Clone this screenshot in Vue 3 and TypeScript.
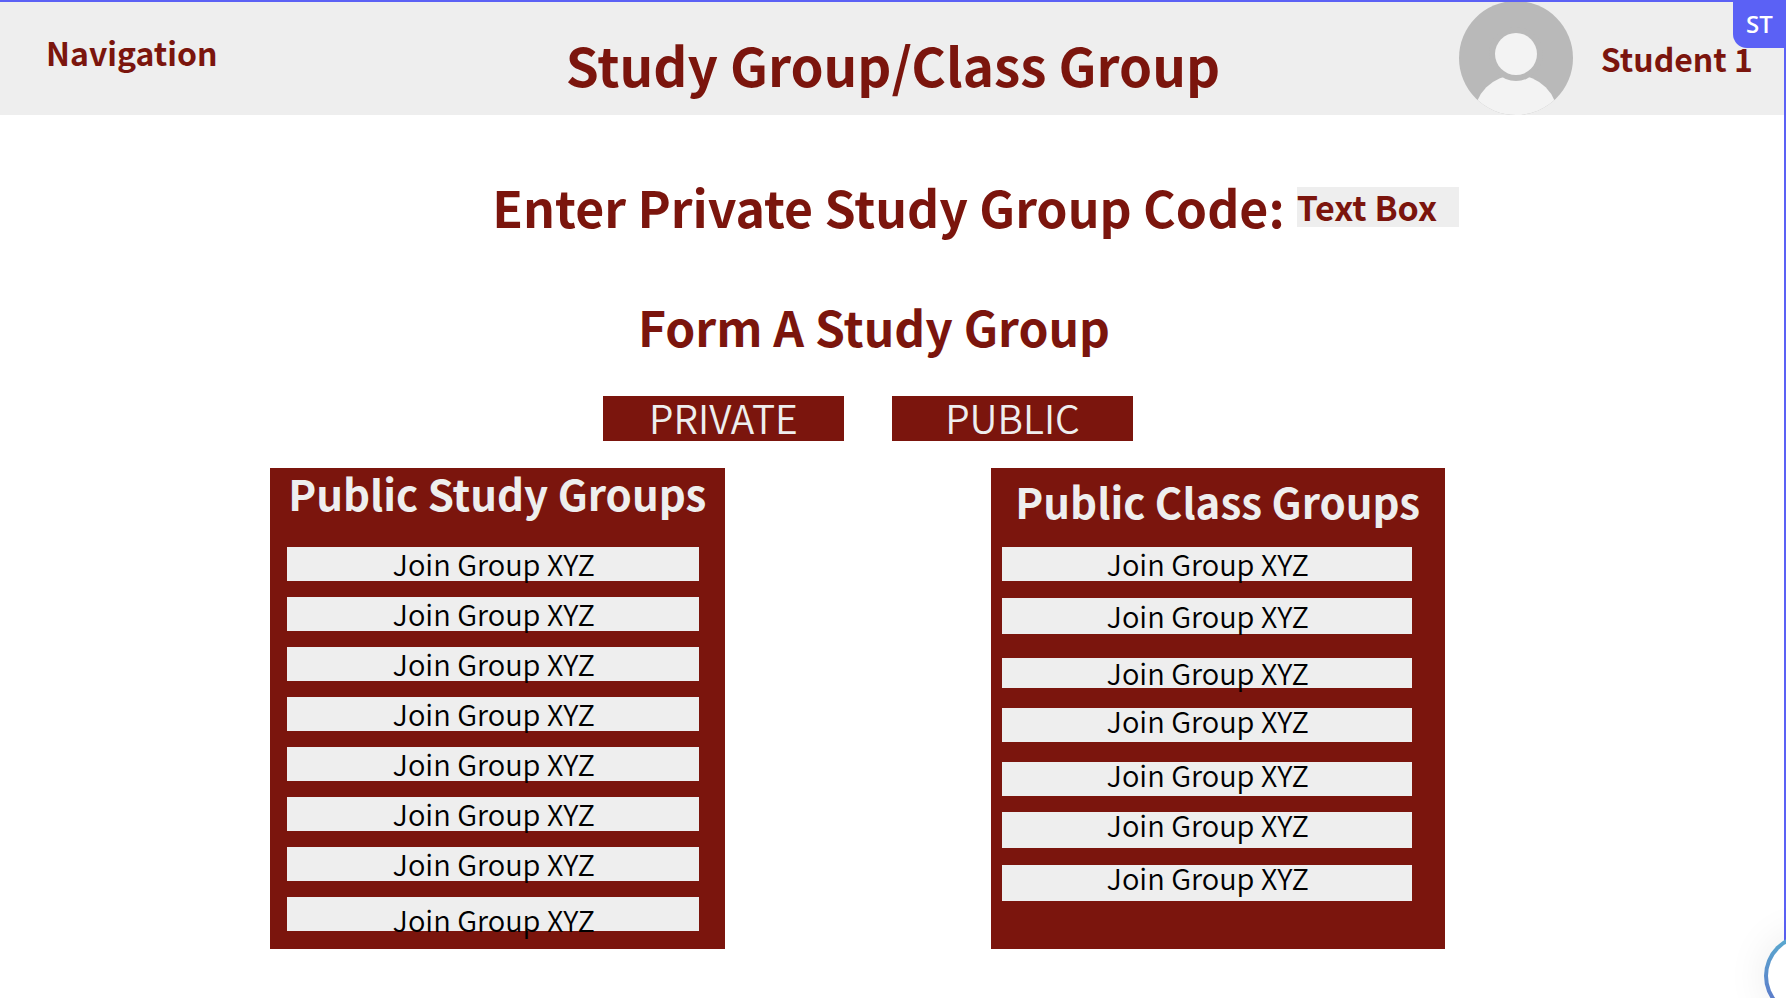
<script setup lang="ts">
import { ref } from 'vue'

type Seat = 'top' | 'middle' | 'bottom'

interface Row {
  label: string
  seat: Seat
  size: 'short' | 'regular' | 'tall'
  gap: number
}

const label = 'Join Group XYZ'
const code = ref('Text Box')

const studyGroups: Row[] = Array.from({ length: 8 }, (_, i) => ({
  label,
  seat: i === 7 ? 'bottom' : 'middle',
  size: 'regular',
  gap: i === 0 ? 0 : 16,
}))

const classGroups: Row[] = [
  { label, seat: 'middle', size: 'regular', gap: 0 },
  { label, seat: 'middle', size: 'tall', gap: 17 },
  { label, seat: 'middle', size: 'short', gap: 24 },
  { label, seat: 'top', size: 'regular', gap: 20 },
  { label, seat: 'top', size: 'regular', gap: 20 },
  { label, seat: 'top', size: 'tall', gap: 16 },
  { label, seat: 'top', size: 'tall', gap: 17 },
]
</script>

<template>
  <div class="page">
    <header class="bar">
      <a class="nav" href="#">Navigation</a>
      <h1 class="title">Study Group/Class Group</h1>
      <div class="user">
        <svg class="avatar" viewBox="0 0 114 114" aria-hidden="true">
          <defs>
            <clipPath id="avatar-clip"><circle cx="57" cy="57" r="57" /></clipPath>
          </defs>
          <g clip-path="url(#avatar-clip)">
            <rect width="114" height="114" fill="#b9b9b9" />
            <circle cx="57" cy="116" r="42" fill="#f3f3f3" />
            <circle cx="57" cy="53" r="27" fill="#b9b9b9" />
            <circle cx="57" cy="53" r="21" fill="#f3f3f3" />
          </g>
        </svg>
        <span class="name">Student 1</span>
      </div>
    </header>

    <main>
      <form class="code" @submit.prevent>
        <label class="heading code-label" for="code">Enter Private Study Group Code:</label>
        <input id="code" v-model="code" class="code-input" type="text" />
      </form>

      <h2 class="heading form-heading">Form A Study Group</h2>
      <div class="choices">
        <button class="choice" type="button">PRIVATE</button>
        <button class="choice" type="button">PUBLIC</button>
      </div>

      <div class="panels">
        <section class="panel">
          <h2 class="panel-title">Public Study Groups</h2>
          <div class="rows study">
            <button
              v-for="(row, i) in studyGroups"
              :key="i"
              type="button"
              class="row"
              :class="[row.seat, row.size]"
              :style="{ marginTop: row.gap + 'px' }"
            >
              {{ row.label }}
            </button>
          </div>
        </section>
        <section class="panel">
          <h2 class="panel-title lowered">Public Class Groups</h2>
          <div class="rows class">
            <button
              v-for="(row, i) in classGroups"
              :key="i"
              type="button"
              class="row"
              :class="[row.seat, row.size]"
              :style="{ marginTop: row.gap + 'px' }"
            >
              {{ row.label }}
            </button>
          </div>
        </section>
      </div>
    </main>

    <div class="edge" aria-hidden="true"></div>
    <span class="badge">ST</span>
    <button class="bubble" type="button" aria-label="Open assistant"></button>
  </div>
</template>

<style>
body {
  margin: 0;
  background: #fff;
}
</style>

<style scoped>
.page {
  position: relative;
  min-height: 100vh;
  overflow: hidden;
  color: #7b150d;
  font-family: "Noto Sans CJK SC", "Noto Sans", sans-serif;
}

h1,
h2 {
  margin: 0;
}

button,
input {
  margin: 0;
  border: 0;
  padding: 0;
  border-radius: 0;
  font-family: inherit;
}

.bar {
  display: grid;
  grid-template-columns: 1fr auto 1fr;
  align-items: center;
  box-sizing: border-box;
  height: 115px;
  padding: 0 33px;
  background: #eee;
}

.nav {
  padding: 0 0 12px 13px;
  color: inherit;
  font-size: 32px;
  font-weight: 700;
  line-height: 40px;
  text-decoration: none;
}

.title {
  padding-top: 12px;
  font-size: 53px;
  font-weight: 700;
  line-height: 64px;
}

.user {
  display: flex;
  align-items: center;
  justify-content: flex-end;
  gap: 28px;
}

.avatar {
  width: 114px;
  height: 114px;
}

.name {
  font-size: 32px;
  font-weight: 700;
  line-height: 40px;
  white-space: nowrap;
}

.code {
  display: flex;
  align-items: center;
  justify-content: center;
  gap: 12px;
  padding: 60px 0 0 165px;
}

.heading {
  font-size: 48px;
  font-weight: 700;
  line-height: 64px;
}

.code-label {
  padding-bottom: 2px;
  font-size: 50px;
  line-height: 62px;
}

.code-input {
  box-sizing: border-box;
  width: 162px;
  height: 40px;
  background: #eee;
  color: inherit;
  font-size: 34px;
  font-weight: 700;
  line-height: 40px;
}

.form-heading {
  padding: 55px 38px 0 0;
  text-align: center;
}

.choices {
  display: flex;
  justify-content: center;
  gap: 48px;
  padding: 38px 50px 0 0;
}

.choice {
  width: 241px;
  height: 45px;
  padding-bottom: 3px;
  background: #7b150d;
  color: #eee;
  font-size: 39px;
  font-weight: 350;
  line-height: 42px;
}

.panels {
  display: grid;
  grid-template-columns: minmax(0, 1fr) minmax(0, 1fr);
  gap: 266px;
  padding: 27px 341px 49px 270px;
}

.panel {
  background: #7b150d;
}

.panel-title {
  box-sizing: border-box;
  height: 79px;
  color: #eee;
  font-size: 42px;
  font-weight: 700;
  line-height: 50px;
  text-align: center;
  white-space: nowrap;
}

.lowered {
  padding-top: 8px;
}

.rows {
  display: flex;
  flex-direction: column;
}

.study {
  padding: 0 26px 18px 17px;
}

.class {
  padding: 0 33px 18px 11px;
}

.row {
  display: flex;
  justify-content: center;
  box-sizing: border-box;
  padding: 0 0 2px 2px;
  background: #eee;
  color: #000;
  font-size: 29px;
  font-weight: 350;
  line-height: 24px;
}

.regular {
  height: 34px;
}

.short {
  height: 30px;
}

.tall {
  height: 36px;
}

.top {
  align-items: flex-start;
}

.middle {
  align-items: center;
}

.bottom {
  align-items: flex-end;
  padding-bottom: 0;
}

.edge {
  position: absolute;
  inset: 0;
  border: solid #5b61f5;
  border-width: 2px 2px 0 0;
  pointer-events: none;
}

.badge {
  position: absolute;
  top: 0;
  right: 0;
  width: 53px;
  height: 48px;
  border-bottom-left-radius: 14px;
  background: #5b61f5;
  color: #fff;
  font-family: "Open Sans", sans-serif;
  font-size: 24px;
  font-weight: 600;
  line-height: 48px;
  text-align: center;
}

.bubble {
  position: fixed;
  right: -62px;
  bottom: -20px;
  width: 84px;
  height: 84px;
  border: 4px solid transparent;
  border-radius: 50%;
  background:
    linear-gradient(#fff, #fff) padding-box,
    linear-gradient(#5aaccf, #5d6fc8) border-box;
  box-shadow: 0 0 40px rgba(0, 0, 0, 0.08);
}
</style>
